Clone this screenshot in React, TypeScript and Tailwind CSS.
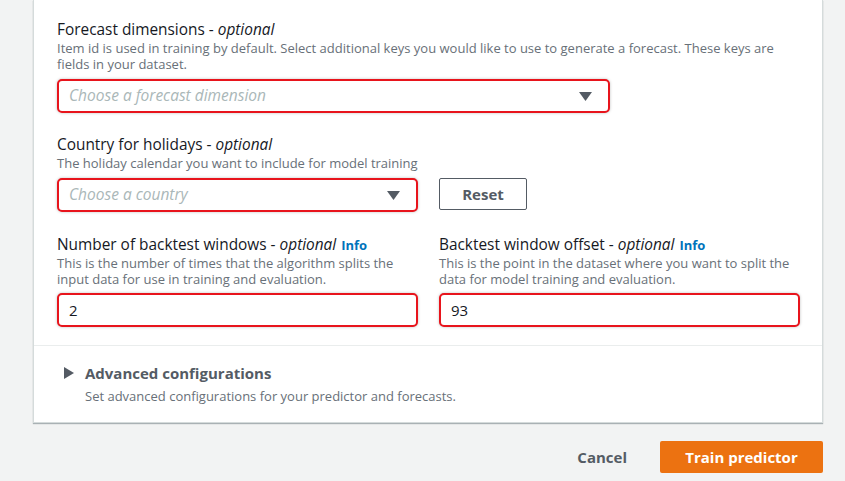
import React from 'react';

const font = { fontFamily: '"Open Sans", "Liberation Sans", sans-serif' };

function DownArrow() {
  return (
    <svg width="13" height="9" viewBox="0 0 13 9" className="shrink-0">
      <path d="M0 0 H13 L6.5 9 Z" fill="#545b64" />
    </svg>
  );
}

function Label({ title, info }: { title: string; info?: boolean }) {
  return (
    <div className="h-[20px] text-[15.4px] leading-[20px] text-[#16191f] whitespace-nowrap">
      {title} - <i>optional</i>
      {info && <span className="ml-[5px] text-[13px] leading-none font-bold text-[#0073bb]">Info</span>}
    </div>
  );
}

function Select({ placeholder, width }: { placeholder: string; width: string }) {
  return (
    <div
      className={`${width} h-[34px] flex items-center justify-between pl-[10px] pr-[16px] bg-white border-2 border-[#e8141c] rounded-[5px] shadow-[0_0_3px_rgba(0,0,0,0.25)]`}
    >
      <span className="italic text-[15.5px] text-[#aab7b8]">{placeholder}</span>
      <DownArrow />
    </div>
  );
}

function Input({ value }: { value: string }) {
  return (
    <div className="w-[361px] h-[34px] flex items-center pl-[10px] bg-white border-2 border-[#e8141c] rounded-[5px] shadow-[0_0_3px_rgba(0,0,0,0.25)]">
      <span className="text-[15px] text-[#16191f]">{value}</span>
    </div>
  );
}

export default function App() {
  return (
    <div className="w-[845px] h-[481px] bg-[#f2f3f3] overflow-hidden" style={font}>
      {/* Card */}
      <div className="ml-[33px] w-[790px] bg-white border-x border-b border-[#d5dbdb] shadow-[0_1px_1px_0_rgba(0,28,36,0.3)]">
        <div className="pl-[23px] pr-[21px] pt-[20px] pb-[18px]">
          {/* Forecast dimensions */}
          <Label title="Forecast dimensions" />
          <p className="text-[13px] leading-[16px] text-[#687078]">
            Item id is used in training by default. Select additional keys you would like to use to generate a forecast. These keys are fields in your dataset.
          </p>
          <div className="mt-[7px]">
            <Select placeholder="Choose a forecast dimension" width="w-[553px]" />
          </div>

          {/* Country for holidays */}
          <div className="mt-[22px]">
            <Label title="Country for holidays" />
            <p className="text-[13px] leading-[16px] text-[#687078]">
              The holiday calendar you want to include for model training
            </p>
            <div className="mt-[7px] flex gap-[21px]">
              <Select placeholder="Choose a country" width="w-[361px]" />
              <button className="w-[88px] h-[32px] border border-[#545b64] rounded-[2px] text-[15px] font-bold text-[#545b64]">
                Reset
              </button>
            </div>
          </div>

          {/* Backtest */}
          <div className="mt-[23px] flex gap-[21px]">
            <div className="w-[361px]">
              <Label title="Number of backtest windows" info />
              <p className="text-[13px] leading-[16px] text-[#687078]">
                This is the number of times that the algorithm splits the input data for use in training and evaluation.
              </p>
              <div className="mt-[6px]">
                <Input value="2" />
              </div>
            </div>
            <div className="w-[361px]">
              <Label title="Backtest window offset" info />
              <p className="text-[13px] leading-[16px] text-[#687078]">
                This is the point in the dataset where you want to split the data for model training and evaluation.
              </p>
              <div className="mt-[6px]">
                <Input value="93" />
              </div>
            </div>
          </div>
        </div>

        {/* Advanced configurations */}
        <div className="border-t border-[#eaeded] pl-[30px] pt-[17px] pb-[18px]">
          <div className="flex items-center gap-[11px]">
            <svg width="10" height="12" viewBox="0 0 10 12">
              <path d="M0 0 L10 6 L0 12 Z" fill="#545b64" />
            </svg>
            <span className="text-[15px] leading-[20px] font-bold text-[#545b64]">Advanced configurations</span>
          </div>
          <p className="ml-[21px] mt-[5px] text-[13px] leading-[16px] text-[#687078]">
            Set advanced configurations for your predictor and forecasts.
          </p>
        </div>
      </div>

      {/* Footer actions */}
      <div className="mt-[18px] w-[823px] flex justify-end items-center gap-[33px]">
        <button className="text-[15px] font-bold text-[#545b64]">Cancel</button>
        <button className="w-[163px] h-[32px] bg-[#ec7211] rounded-[2px] text-[15px] font-bold text-white">
          Train predictor
        </button>
      </div>
    </div>
  );
}
